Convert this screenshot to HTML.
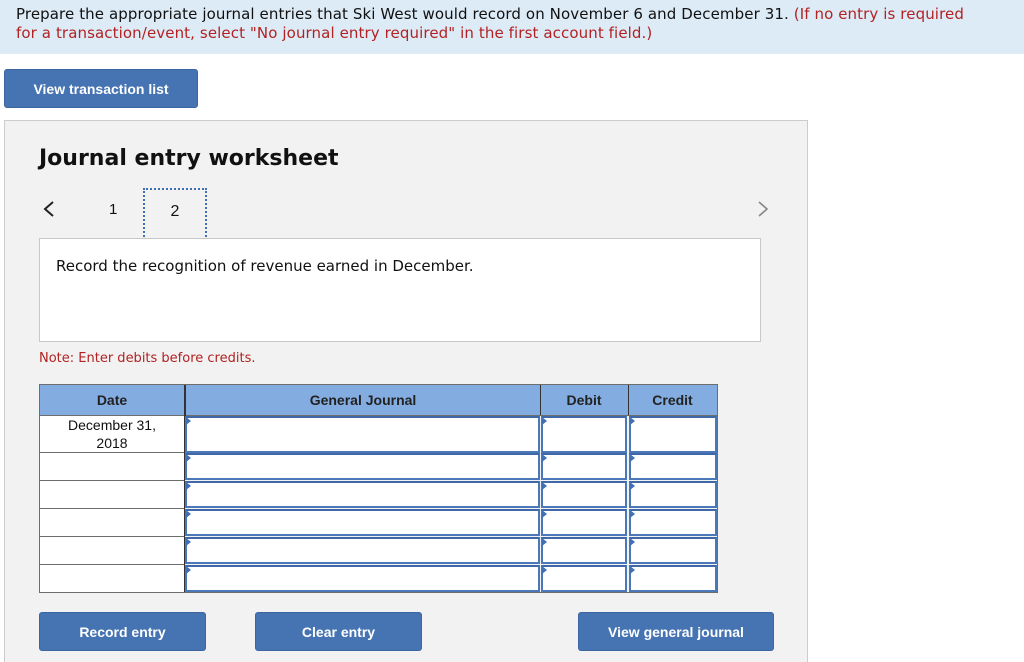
<!DOCTYPE html>
<html><head><style>
html,body{margin:0;width:1024px;height:662px;overflow:hidden}
body{position:relative;background:#fff;font-family:"DejaVu Sans","Liberation Sans",sans-serif}
.a{position:absolute}
.btn{position:absolute;background:#4673b2;color:#fff;font:bold 14px "Liberation Sans",sans-serif;text-align:center;border-radius:3px;border:1px solid #3d66a0;box-sizing:border-box}
.c{position:absolute;box-sizing:border-box}
.in{position:absolute;box-sizing:border-box;background:#fff;border:2px solid #4a78b8;border-top-color:#3e68a8}
.tri{position:absolute;width:0;height:0;border-top:4px solid transparent;border-bottom:4px solid transparent;border-left:5px solid #3f6fb5}
.th{position:absolute;top:385px;height:31px;font:bold 14px "Liberation Sans",sans-serif;line-height:31px;text-align:center;color:#222}
</style></head><body>
<div class="a" style="left:0;top:0;width:1024px;height:54px;background:#ddebf7"></div>
<div class="a" style="left:16px;top:5px;width:998px;font-size:15px;line-height:19px;color:#111;letter-spacing:0.1px">Prepare the appropriate journal entries that Ski West would record on November 6 and December 31. <span style="color:#b22222">(If no entry is required<br>for a transaction/event, select "No journal entry required" in the first account field.)</span></div>
<div class="btn" style="left:4px;top:69px;width:194px;height:39px;line-height:38px">View transaction list</div>
<div class="a" style="left:4px;top:120px;width:802px;height:542px;background:#f2f2f2;border:1px solid #ccc;border-bottom:none"></div>
<div class="a" style="left:39px;top:146px;font-weight:bold;font-size:22px;color:#111">Journal entry worksheet</div>
<svg class="a" style="left:42px;top:200px" width="14" height="18"><path d="M11 2L3 9L11 16" stroke="#222" stroke-width="2" fill="none"/></svg>
<div class="a" style="left:109px;top:201px;font:15px 'Liberation Sans',sans-serif;color:#111">1</div>
<div class="a" style="left:143px;top:188px;width:64px;height:52px;border:2px dotted #3f6fb5;box-sizing:border-box;text-align:center;font:16px 'Liberation Sans',sans-serif;line-height:44px;color:#111">2</div>
<svg class="a" style="left:756px;top:200px" width="14" height="18"><path d="M3 2L11 9L3 16" stroke="#888" stroke-width="1.6" fill="none"/></svg>
<div class="a" style="left:39px;top:238px;width:722px;height:104px;background:#fff;border:1px solid #c8c8c8;box-sizing:border-box"></div>
<div class="a" style="left:56px;top:257px;font-size:15px;color:#111">Record the recognition of revenue earned in December.</div>
<div class="a" style="left:39px;top:350px;font-size:13px;line-height:17px;color:#b22222">Note: Enter debits before credits.</div>
<div class="c" style="left:39px;top:384px;width:679px;height:209px;background:#6d6d6d"></div>
<div class="c" style="left:40px;top:385px;width:677px;height:30px;background:#83ace0"></div>
<div class="c" style="left:184px;top:385px;width:2px;height:207px;background:#333"></div>
<div class="th" style="left:40px;width:144px">Date</div>
<div class="th" style="left:186px;width:354px">General Journal</div>
<div class="th" style="left:540px;width:88px">Debit</div>
<div class="th" style="left:628px;width:89px">Credit</div>
<div class="c" style="left:540px;top:385px;width:1px;height:30px;background:#333"></div>
<div class="c" style="left:628px;top:385px;width:1px;height:30px;background:#333"></div>
<div class="c" style="left:185px;top:416px;width:532px;height:176px;background:#f2f2f2"></div>
<div class="c" style="left:40px;top:416px;width:144px;height:36px;background:#fff;text-align:center;font:14px 'Liberation Sans',sans-serif;line-height:18px;color:#111">December 31,<br>2018</div>
<div class="c" style="left:40px;top:453px;width:144px;height:27px;background:#fff"></div>
<div class="c" style="left:40px;top:481px;width:144px;height:27px;background:#fff"></div>
<div class="c" style="left:40px;top:509px;width:144px;height:27px;background:#fff"></div>
<div class="c" style="left:40px;top:537px;width:144px;height:27px;background:#fff"></div>
<div class="c" style="left:40px;top:565px;width:144px;height:27px;background:#fff"></div>
<div class="in" style="left:185px;top:416px;width:355px;height:37px"></div><div class="in" style="left:541px;top:416px;width:86px;height:37px"></div><div class="in" style="left:629px;top:416px;width:88px;height:37px"></div>
<div class="tri" style="left:186px;top:417px"></div><div class="tri" style="left:542px;top:417px"></div><div class="tri" style="left:630px;top:417px"></div>
<div class="in" style="left:185px;top:453px;width:355px;height:27px"></div><div class="in" style="left:541px;top:453px;width:86px;height:27px"></div><div class="in" style="left:629px;top:453px;width:88px;height:27px"></div>
<div class="tri" style="left:186px;top:454px"></div><div class="tri" style="left:542px;top:454px"></div><div class="tri" style="left:630px;top:454px"></div>
<div class="in" style="left:185px;top:481px;width:355px;height:27px"></div><div class="in" style="left:541px;top:481px;width:86px;height:27px"></div><div class="in" style="left:629px;top:481px;width:88px;height:27px"></div>
<div class="tri" style="left:186px;top:482px"></div><div class="tri" style="left:542px;top:482px"></div><div class="tri" style="left:630px;top:482px"></div>
<div class="in" style="left:185px;top:509px;width:355px;height:27px"></div><div class="in" style="left:541px;top:509px;width:86px;height:27px"></div><div class="in" style="left:629px;top:509px;width:88px;height:27px"></div>
<div class="tri" style="left:186px;top:510px"></div><div class="tri" style="left:542px;top:510px"></div><div class="tri" style="left:630px;top:510px"></div>
<div class="in" style="left:185px;top:537px;width:355px;height:27px"></div><div class="in" style="left:541px;top:537px;width:86px;height:27px"></div><div class="in" style="left:629px;top:537px;width:88px;height:27px"></div>
<div class="tri" style="left:186px;top:538px"></div><div class="tri" style="left:542px;top:538px"></div><div class="tri" style="left:630px;top:538px"></div>
<div class="in" style="left:185px;top:565px;width:355px;height:27px"></div><div class="in" style="left:541px;top:565px;width:86px;height:27px"></div><div class="in" style="left:629px;top:565px;width:88px;height:27px"></div>
<div class="tri" style="left:186px;top:566px"></div><div class="tri" style="left:542px;top:566px"></div><div class="tri" style="left:630px;top:566px"></div>
<div class="btn" style="left:39px;top:612px;width:167px;height:39px;line-height:38px">Record entry</div>
<div class="btn" style="left:255px;top:612px;width:167px;height:39px;line-height:38px">Clear entry</div>
<div class="btn" style="left:578px;top:612px;width:196px;height:39px;line-height:38px">View general journal</div>
</body></html>
